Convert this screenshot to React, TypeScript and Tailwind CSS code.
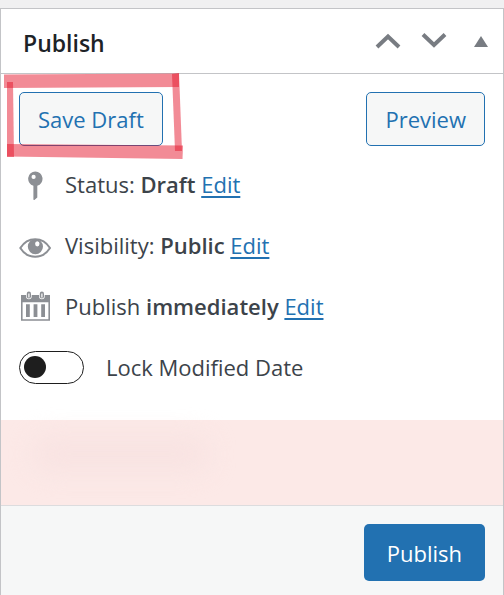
import { useState } from 'react';
import type { ReactNode } from 'react';

function KeyIcon() {
  return (
    <svg viewBox="0 0 32 32" className="size-8 shrink-0 fill-[#8c8f94]" aria-hidden="true">
      <path fillRule="evenodd" d="M16.3 3.5a7.3 7.3 0 0 1 2 14.3V29.500l-2.600 2.300a.8.8 0 0 1-1.300-.6V17.800A7.300 7.300 0 0 1 16.300 3.500Zm-1.700 3.300a2.100 2.100 0 1 0 0 4.200 2.100 2.100 0 0 0 0-4.200Z" />
    </svg>
  );
}

function EyeIcon() {
  return (
    <svg viewBox="0 0 32 32" className="size-8 shrink-0" aria-hidden="true">
      <path d="M1.300 19C5 13.100 10 10.200 16.200 10.200S27.300 13.100 31 19C27.300 24.900 22.400 27.800 16.200 27.800S5 24.900 1.300 19Z" fill="none" stroke="#8c8f94" strokeWidth="2" />
      <path fillRule="evenodd" fill="#8c8f94" d="M16.400 10a7.600 7.600 0 1 1 0 15.200 7.600 7.600 0 0 1 0-15.200Zm1.900 2.200a2.200 2.600 0 1 0 0 5.200 2.200 2.600 0 0 0 0-5.200Z" />
    </svg>
  );
}

function CalendarIcon() {
  return (
    <svg viewBox="0 0 32 32" className="size-8 shrink-0 fill-[#8c8f94]" aria-hidden="true">
      <path fillRule="evenodd" d="M2 5h29v25.700H2V5Zm1.600 7.300v16.900h25.800V12.300H3.600Z" />
      <path d="M7 14.300h3.800V27H7zM14.600 14.300h3.800V27h-3.800zM22.200 14.300H26V27h-3.800z" />
      <rect x="7.800" y="1.600" width="4.200" height="7" rx="2.100" stroke="#fff" strokeWidth="1.400" paintOrder="stroke" />
      <rect x="20.800" y="1.600" width="4.200" height="7" rx="2.100" stroke="#fff" strokeWidth="1.400" paintOrder="stroke" />
      <path d="M9.300 3.400h1.200v4H9.300zM22.300 3.400h1.200v4h-1.200z" fill="#fff" />
    </svg>
  );
}

// Marker strokes around the highlighted button
function Marker() {
  return (
    <svg viewBox="0 0 180 88" className="pointer-events-none absolute -top-5 -left-4 h-[88px] w-[180px] max-w-none" aria-hidden="true">
      <g fill="rgb(228,18,41)" fillOpacity="0.49">
        <path d="M1 2.500 176 1.500V15L1 16Z" />
        <path d="M4 10h6l1 75H4Z" />
        <path d="m4 72 176 1.500L179.500 87 4 84.500Z" />
        <path d="m169 2 7-1 3 78h-7Z" />
      </g>
    </svg>
  );
}

function Row({ icon, label, value }: { icon: ReactNode; label: string; value: string }) {
  return (
    <div className="flex h-8 items-center gap-3.5">
      {icon}
      <p>
        {label} <strong className="font-semibold">{value}</strong>{' '}
        <a href="#edit" className="text-[#2271b1] underline decoration-2 underline-offset-3">Edit</a>
      </p>
    </div>
  );
}

const outlineButton =
  'h-[54px] rounded-[5px] border border-[#2271b1] bg-[#f6f7f7] px-[18px] text-[#2271b1]';

export default function App() {
  const [open, setOpen] = useState(true);
  const [locked, setLocked] = useState(false);

  return (
    <div className="flex min-h-screen flex-col bg-[#f0f0f1] pt-2 font-['Open_Sans','Noto_Sans',sans-serif] text-[22px] leading-8 text-[#3c434a]">
      <section className="flex flex-1 flex-col border border-b-0 border-[#c3c4c7] bg-white">
        <header className="flex h-[65px] items-center justify-between border-b border-[#c3c4c7] pr-2.5 pl-[22px]">
          <h2 className="pt-1 text-[23px] font-semibold text-[#1d2327]">Publish</h2>
          <div className="flex items-center text-[#787c82]">
            <button type="button" aria-label="Move up" className="flex w-[46px] justify-center">
              <svg viewBox="0 0 26 16" className="h-4 w-[26px]" fill="none" stroke="currentColor" strokeWidth="4">
                <path d="M2 14 13 3.500 24 14" />
              </svg>
            </button>
            <button type="button" aria-label="Move down" className="flex w-[46px] justify-center">
              <svg viewBox="0 0 26 16" className="h-4 w-[26px]" fill="none" stroke="currentColor" strokeWidth="4">
                <path d="M2 1.500 13 12 24 1.500" />
              </svg>
            </button>
            <button type="button" aria-label="Toggle panel" aria-expanded={open} onClick={() => setOpen(!open)} className="ml-3 flex w-6 justify-center">
              <svg viewBox="0 0 14 11" className="h-[11px] w-3.5" fill="currentColor">
                <path d="M7 0 14 11H0Z" />
              </svg>
            </button>
          </div>
        </header>

        {open && (
          <>
            <div className="px-[18px] pt-[18px] pb-[37px]">
              <div className="flex justify-between">
                <div className="relative">
                  <button type="button" className={outlineButton}>Save Draft</button>
                  <Marker />
                </div>
                <button type="button" className={outlineButton}>Preview</button>
              </div>

              <div className="mt-[22px] flex flex-col gap-[29px]">
                <Row icon={<KeyIcon />} label="Status:" value="Draft" />
                <Row icon={<EyeIcon />} label="Visibility:" value="Public" />
                <Row icon={<CalendarIcon />} label="Publish" value="immediately" />
                <label className="flex h-8 items-center gap-[22px]">
                  <input
                    type="checkbox"
                    role="switch"
                    checked={locked}
                    onChange={(e) => setLocked(e.target.checked)}
                    className="flex h-[33px] w-[65px] shrink-0 appearance-none items-center rounded-full border border-[#1e1e1e] px-1 before:size-[22px] before:rounded-full before:bg-[#1e1e1e] checked:justify-end"
                  />
                  Lock Modified Date
                </label>
              </div>
            </div>

            <div className="h-[85px] bg-[#fce9e7] px-8 pt-4">
              <div className="h-9 w-44 rounded-full bg-[#f8e3e2] blur-md" />
            </div>

            <footer className="flex flex-1 items-start justify-end border-t border-[#dcdcde] bg-[#f6f7f7] px-[18px] pt-[18px]">
              <button type="button" className="h-[57px] rounded-[5px] bg-[#2271b1] px-[23px] text-white">Publish</button>
            </footer>
          </>
        )}
      </section>
    </div>
  );
}
